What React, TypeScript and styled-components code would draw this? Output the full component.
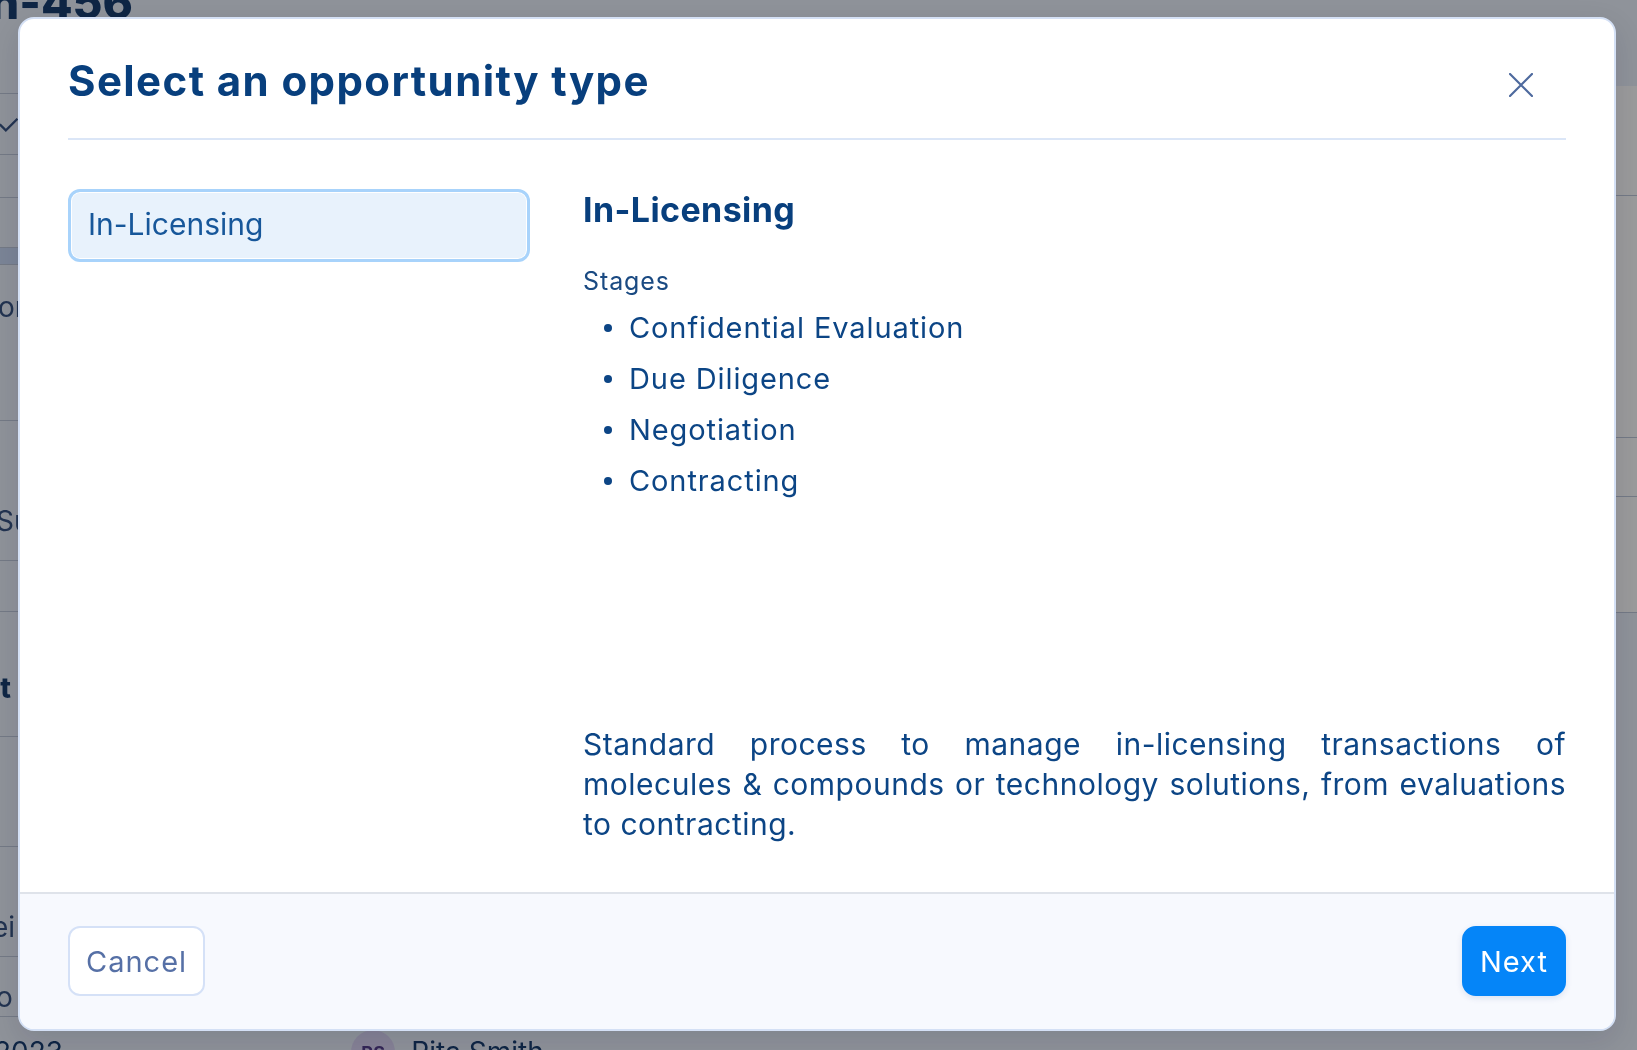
import React, { useState } from "react";
import styled, { createGlobalStyle } from "styled-components";

const GlobalStyle = createGlobalStyle`
  html, body {
    margin: 0;
    padding: 0;
    height: 100%;
    overflow: hidden;
  }
  body {
    font-family: Inter, "Noto Sans", Arial, sans-serif;
    background: #e7eaee;
  }
  * {
    box-sizing: border-box;
  }
`;

/* ---------- page behind the dialog ---------- */

const Page = styled.div`
  position: fixed;
  inset: 0;
  display: flex;
  flex-direction: column;
  color: #0b2f5c;
`;

const PageTitle = styled.h1`
  margin: -26px 0 0 -10px;
  font-size: 46px;
  font-weight: 800;
  line-height: 56px;
  color: #0b2f5c;
`;

const PageBody = styled.div`
  flex: 1;
  display: grid;
  grid-template-columns: 1227px 1fr;
`;

const LeftColumn = styled.div`
  display: flex;
  flex-direction: column;
`;

const RightColumn = styled.div`
  display: flex;
  flex-direction: column;
  border-left: 1px solid #c9ced8;
`;

const BgRow = styled.div<{ $h: number; $top?: number; $band?: boolean; $bold?: boolean }>`
  height: ${(p) => p.$h}px;
  flex-shrink: 0;
  display: flex;
  align-items: flex-start;
  padding-top: ${(p) => p.$top ?? 0}px;
  border-bottom: 1px solid #b9c0cc;
  background: ${(p) => (p.$band ? "#c4d3e8" : "transparent")};
  font-size: 28px;
  line-height: 40px;
  font-weight: ${(p) => (p.$bold ? 800 : 400)};
  color: ${(p) => (p.$bold ? "#0b2f5c" : "#2b4670")};
  white-space: nowrap;
  overflow: hidden;
`;

const Clip = styled.span<{ $shift: number }>`
  margin-left: ${(p) => -p.$shift}px;
`;

const CardArea = styled.div`
  margin-top: 56px;
  display: flex;
  flex-direction: column;
  background: #fbf8f1;
`;

const CardRow = styled.div<{ $h: number }>`
  height: ${(p) => p.$h}px;
  border-bottom: 1px solid #b9c0cc;
`;

const OwnerRow = styled.div`
  display: flex;
  align-items: center;
  gap: 16px;
  margin-top: auto;
  margin-bottom: -24px;
  font-size: 28px;
  color: #0b2f5c;
`;

const Year = styled.span`
  margin-left: -6px;
  margin-right: 272px;
`;

const Avatar = styled.span`
  width: 44px;
  height: 44px;
  border-radius: 50%;
  background: #d9cfe8;
  color: #4a2f7a;
  font-size: 18px;
  font-weight: 700;
  display: flex;
  align-items: center;
  justify-content: center;
`;

const Overlay = styled.div`
  position: fixed;
  inset: 0;
  background: rgba(22, 27, 38, 0.42);
`;

/* ---------- dialog ---------- */

const Dialog = styled.div`
  position: fixed;
  top: 17px;
  left: 18px;
  right: 21px;
  bottom: 19px;
  display: flex;
  flex-direction: column;
  background: #ffffff;
  border: 2px solid #d4e0f5;
  border-radius: 16px;
  overflow: hidden;
  box-shadow: 0 10px 30px rgba(10, 20, 40, 0.12);
`;

const Header = styled.div`
  display: flex;
  align-items: center;
  justify-content: space-between;
  margin: 0 48px;
  padding: 38px 0 33px;
  border-bottom: 2px solid #dbe6f7;
`;

const Title = styled.h2`
  margin: 0;
  font-size: 42px;
  line-height: 48px;
  font-weight: 700;
  letter-spacing: 1.4px;
  color: #083f7d;
`;

const CloseButton = styled.button`
  all: unset;
  box-sizing: border-box;
  cursor: pointer;
  width: 48px;
  height: 48px;
  margin: 4px 21px -4px 0;
  display: flex;
  align-items: center;
  justify-content: center;
  color: #4e6a9e;
`;

const Body = styled.div`
  flex: 1;
  display: grid;
  grid-template-columns: 462px 1fr;
  gap: 53px;
  padding: 49px 48px 48px;
  min-height: 0;
`;

const TypeList = styled.div`
  display: flex;
  flex-direction: column;
  gap: 12px;
`;

const TypeItem = styled.button<{ $selected: boolean }>`
  all: unset;
  box-sizing: border-box;
  cursor: pointer;
  height: 73px;
  padding: 0 17px 3px;
  display: flex;
  align-items: center;
  border: 3px solid ${(p) => (p.$selected ? "#a8d3fb" : "#dbe6f7")};
  border-radius: 12px;
  background: ${(p) => (p.$selected ? "#e8f2fc" : "#ffffff")};
  box-shadow: inset 0 0 0 1px #ffffff;
  font-family: Inter, "Noto Sans", Arial, sans-serif;
  font-size: 30px;
  color: #17579a;
`;

const Detail = styled.div`
  display: flex;
  flex-direction: column;
  color: #0c4585;
`;

const DetailTitle = styled.h3`
  margin: 0;
  font-size: 34px;
  line-height: 41px;
  font-weight: 700;
  letter-spacing: 0.4px;
  color: #083f7d;
`;

const StagesLabel = styled.div`
  margin-top: 34px;
  font-size: 25px;
  line-height: 35px;
  letter-spacing: 0.9px;
  color: #1a4a82;
`;

const StageList = styled.ul`
  margin: 3px 0 0;
  padding: 0 0 0 21px;
  list-style: none;
`;

const Stage = styled.li`
  display: flex;
  align-items: center;
  gap: 17px;
  font-size: 29px;
  line-height: 51px;
  letter-spacing: 0.9px;

  &::before {
    content: "";
    width: 8px;
    height: 8px;
    border-radius: 50%;
    background: currentColor;
    flex-shrink: 0;
  }
`;

const Description = styled.p`
  margin: auto 0 0;
  font-size: 30px;
  line-height: 40px;
  letter-spacing: 0.5px;
  text-align: justify;
  color: #0c4585;
`;

const Footer = styled.div`
  display: flex;
  justify-content: space-between;
  align-items: center;
  padding: 32px 48px 33px;
  background: #f7f9fe;
  border-top: 2px solid #dfe3ea;
`;

const FooterButton = styled.button<{ $primary?: boolean }>`
  all: unset;
  box-sizing: border-box;
  cursor: pointer;
  height: 70px;
  padding: 0 16px;
  display: flex;
  align-items: center;
  border-radius: ${(p) => (p.$primary ? 14 : 12)}px;
  border: 2px solid ${(p) => (p.$primary ? "#0585f8" : "#d5e1f7")};
  background: ${(p) => (p.$primary ? "#0585f8" : "#ffffff")};
  color: ${(p) => (p.$primary ? "#ffffff" : "#5670a6")};
  font-family: Inter, "Noto Sans", Arial, sans-serif;
  font-size: 29px;
  letter-spacing: 1px;
  box-shadow: ${(p) => (p.$primary ? "0 2px 6px rgba(5, 60, 140, 0.12)" : "none")};
`;

const types = [
  {
    name: "In-Licensing",
    stages: ["Confidential Evaluation", "Due Diligence", "Negotiation", "Contracting"],
    description:
      "Standard process to manage in-licensing transactions of molecules & compounds or technology solutions, from evaluations to contracting.",
  },
];

const CloseIcon = () => (
  <svg width="24" height="24" viewBox="0 0 24 24" fill="none">
    <path d="M1 1L23 23M23 1L1 23" stroke="currentColor" strokeWidth="2.2" strokeLinecap="round" />
  </svg>
);

export default function App() {
  const [selected, setSelected] = useState(0);
  const current = types[selected];

  return (
    <>
      <GlobalStyle />
      <Page>
        <PageTitle>n-456</PageTitle>
        <PageBody>
          <LeftColumn>
            <BgRow $h={64} />
            <BgRow $h={61} $top={10}>
              <Clip $shift={4}>✓</Clip>
            </BgRow>
            <BgRow $h={43} />
            <BgRow $h={50} />
            <BgRow $h={17} $band />
            <BgRow $h={156} $top={22}>
              <Clip $shift={2}>or</Clip>
            </BgRow>
            <BgRow $h={140} $top={80}>
              <Clip $shift={4}>Su</Clip>
            </BgRow>
            <BgRow $h={51} />
            <BgRow $h={125} $top={56} $bold>
              <Clip $shift={12}>rt</Clip>
            </BgRow>
            <BgRow $h={110} $top={32} $bold>
              <Clip $shift={12}>l</Clip>
            </BgRow>
            <BgRow $h={110} $top={60}>
              <Clip $shift={8}>ei</Clip>
            </BgRow>
            <BgRow $h={60} $top={20}>
              <Clip $shift={4}>o</Clip>
            </BgRow>
          </LeftColumn>
          <RightColumn>
            <CardArea>
              <CardRow $h={110} />
              <CardRow $h={242} />
              <CardRow $h={59} />
              <CardRow $h={116} />
            </CardArea>
          </RightColumn>
        </PageBody>
        <OwnerRow>
          <Year>2023</Year>
          <Avatar>RS</Avatar>
          <span>Rita Smith</span>
        </OwnerRow>
      </Page>
      <Overlay />
      <Dialog role="dialog" aria-labelledby="dialog-title">
        <Header>
          <Title id="dialog-title">Select an opportunity type</Title>
          <CloseButton aria-label="Close">
            <CloseIcon />
          </CloseButton>
        </Header>
        <Body>
          <TypeList>
            {types.map((t, i) => (
              <TypeItem key={t.name} $selected={i === selected} onClick={() => setSelected(i)}>
                {t.name}
              </TypeItem>
            ))}
          </TypeList>
          <Detail>
            <DetailTitle>{current.name}</DetailTitle>
            <StagesLabel>Stages</StagesLabel>
            <StageList>
              {current.stages.map((s) => (
                <Stage key={s}>{s}</Stage>
              ))}
            </StageList>
            <Description>{current.description}</Description>
          </Detail>
        </Body>
        <Footer>
          <FooterButton>Cancel</FooterButton>
          <FooterButton $primary>Next</FooterButton>
        </Footer>
      </Dialog>
    </>
  );
}
